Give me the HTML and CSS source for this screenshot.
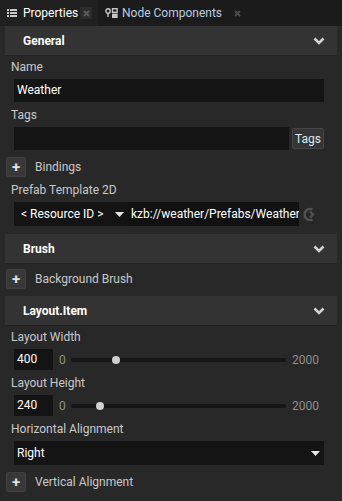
FILE: index.html
```html
<!DOCTYPE html>
<html>
<head>
  <title>Properties</title>
  <link rel="stylesheet" href="styles.css">
</head>
<body>
  <div class="tabs">
    <div class="tab active">
      <svg class="tab-icon" width="10" height="8" viewBox="0 0 10 8">
        <rect x="0" y="0" width="2" height="2" fill="#c8c8c8"/>
        <rect x="3" y="0" width="7" height="2" fill="#c8c8c8"/>
        <rect x="0" y="3" width="2" height="2" fill="#c8c8c8"/>
        <rect x="3" y="3" width="7" height="2" fill="#c8c8c8"/>
        <rect x="0" y="6" width="2" height="2" fill="#c8c8c8"/>
        <rect x="3" y="6" width="7" height="2" fill="#c8c8c8"/>
      </svg>
      <span>Properties</span>
      <span class="close boxed">
        <svg width="7" height="7" viewBox="0 0 7 7"><path d="M1 1L6 6M6 1L1 6" stroke="#5a5a5a" stroke-width="2"/></svg>
      </span>
    </div>
    <div class="tab">
      <svg class="tab-icon tight" width="14" height="10" viewBox="0 0 14 10">
        <circle cx="3" cy="3" r="2.2" fill="none" stroke="#c8c8c8" stroke-width="1.4"/>
        <rect x="2.3" y="5" width="1.4" height="4" fill="#c8c8c8"/>
        <rect x="7.5" y="0.7" width="4.6" height="3.6" fill="none" stroke="#c8c8c8" stroke-width="1.4"/>
        <rect x="7" y="5.6" width="5.6" height="4.4" fill="#c8c8c8"/>
      </svg>
      <span>Node Components</span>
      <span class="close">
        <svg width="7" height="7" viewBox="0 0 7 7"><path d="M1 1L6 6M6 1L1 6" stroke="#4a4a4a" stroke-width="2"/></svg>
      </span>
    </div>
  </div>

  <div class="panel">
    <div class="section-head">
      <span>General</span>
      <svg class="chevron" width="12" height="8" viewBox="0 0 12 8"><path d="M1.5 1.5L6 6L10.5 1.5" fill="none" stroke="#d2d2d2" stroke-width="2.6"/></svg>
    </div>

    <div class="field">
      <div class="label">Name</div>
      <div class="input">Weather</div>
    </div>

    <div class="field">
      <div class="label">Tags</div>
      <div class="row">
        <div class="input grow"></div>
        <button class="btn">Tags</button>
      </div>
    </div>

    <div class="add-row">
      <span class="plus">+</span>
      <span>Bindings</span>
    </div>

    <div class="field">
      <div class="label">Prefab Template 2D</div>
      <div class="row resource">
        <div class="combo small">
          <span>&lt; Resource ID &gt;</span>
          <svg width="9" height="5" viewBox="0 0 9 5"><path d="M0 0H9L4.5 5Z" fill="#e6e6e6"/></svg>
        </div>
        <div class="input path">kzb://weather/Prefabs/Weather</div>
        <svg class="goto" width="15" height="15" viewBox="0 0 15 15">
          <path d="M9.5 2.4A5.6 5.6 0 1 0 9.5 12.6" fill="none" stroke="#505050" stroke-width="2.4"/>
          <path d="M7 4.5L10 7.5L7 10.5" fill="none" stroke="#505050" stroke-width="2.4"/>
        </svg>
      </div>
    </div>

    <div class="section-head">
      <span>Brush</span>
      <svg class="chevron" width="12" height="8" viewBox="0 0 12 8"><path d="M1.5 1.5L6 6L10.5 1.5" fill="none" stroke="#d2d2d2" stroke-width="2.6"/></svg>
    </div>

    <div class="add-row">
      <span class="plus">+</span>
      <span>Background Brush</span>
    </div>

    <div class="section-head">
      <span>Layout.Item</span>
      <svg class="chevron" width="12" height="8" viewBox="0 0 12 8"><path d="M1.5 1.5L6 6L10.5 1.5" fill="none" stroke="#d2d2d2" stroke-width="2.6"/></svg>
    </div>

    <div class="field">
      <div class="label">Layout Width</div>
      <div class="row slider-row">
        <div class="input num">400</div>
        <span class="range">0</span>
        <div class="track"><div class="travel"><span class="thumb" style="left: 20%"></span></div></div>
        <span class="range">2000</span>
      </div>
    </div>

    <div class="field">
      <div class="label">Layout Height</div>
      <div class="row slider-row">
        <div class="input num">240</div>
        <span class="range">0</span>
        <div class="track"><div class="travel"><span class="thumb" style="left: 12%"></span></div></div>
        <span class="range">2000</span>
      </div>
    </div>

    <div class="field">
      <div class="label">Horizontal Alignment</div>
      <div class="combo wide">
        <span>Right</span>
        <svg width="9" height="5" viewBox="0 0 9 5"><path d="M0 0H9L4.5 5Z" fill="#e6e6e6"/></svg>
      </div>
    </div>

    <div class="add-row">
      <span class="plus">+</span>
      <span>Vertical Alignment</span>
    </div>
  </div>
</body>
</html>
```

FILE: styles.css
```css
body {
  margin: 0;
  background: #282828;
  font-family: Roboto, "Open Sans", sans-serif;
  font-size: 12px;
  color: #c8c8c8;
  width: 342px;
  height: 501px;
  overflow: hidden;
}

/* tab strip */
.tabs {
  display: flex;
  height: 26px;
  background: #1b1b1b;
}
.tab {
  display: flex;
  align-items: center;
  padding: 0 6px 0 7px;
  font-size: 12px;
  color: #b9cde0;
}
.tab.active {
  width: 85px;
  background: #202020;
  color: #ffffff;
}
.tab-icon {
  margin-right: 6px;
  flex: none;
}
.tab-icon.tight {
  margin-right: 3px;
}
.close {
  display: flex;
  align-items: center;
  justify-content: center;
  width: 12px;
  height: 12px;
  margin-left: 9px;
}
.close.boxed {
  background: #2c2c2c;
  margin-left: auto;
}

.panel {
  padding: 0 5px;
}

/* collapsible section headers */
.section-head {
  display: flex;
  align-items: center;
  justify-content: space-between;
  height: 30px;
  padding: 0 12px 0 18px;
  background: #333333;
  border-bottom: 1px solid #222;
  box-sizing: border-box;
  color: #ffffff;
  font-weight: bold;
  margin-top: 8px;
}
.panel > .section-head:first-child {
  margin-top: 0;
}
.add-row + .section-head {
  margin-top: 7px;
}

.field {
  padding: 5px 13px 0 9px;
}
.section-head + .field {
  padding-top: 3px;
}
.label {
  line-height: 16px;
  margin: 0 0 4px -3px;
}
.row {
  display: flex;
  align-items: center;
}
.input {
  height: 23px;
  line-height: 23px;
  padding: 0 3px;
  background: #141414;
  color: #ffffff;
  box-sizing: border-box;
  white-space: nowrap;
  overflow: hidden;
}
.grow {
  flex: 1;
}
.btn {
  height: 21px;
  margin-left: 3px;
  padding: 0 2px;
  background: #353535;
  border: 1px solid #454545;
  border-radius: 2px;
  color: #dde8f2;
  font: inherit;
}

/* add property rows */
.add-row {
  display: flex;
  align-items: center;
  height: 20px;
  margin-top: 7px;
  padding-left: 1px;
}
.section-head + .add-row {
  margin-top: 5px;
}
.plus {
  display: flex;
  align-items: center;
  justify-content: center;
  width: 20px;
  height: 20px;
  margin-right: 9px;
  background: #383838;
  border: 1px solid #404040;
  border-radius: 2px;
  box-sizing: border-box;
  color: #e0e0e0;
  font-weight: bold;
  font-size: 15px;
}

/* combos */
.combo {
  display: flex;
  align-items: center;
  justify-content: space-between;
  height: 24px;
  background: #141414;
  color: #ffffff;
  box-sizing: border-box;
  padding: 0 4px 0 3px;
}
.combo.small {
  width: 114px;
  padding-left: 7px;
}
.resource .path {
  height: 24px;
  line-height: 24px;
  width: 171px;
  flex: none;
  background: #111;
}
.goto {
  margin-left: 4px;
}

/* sliders */
.slider-row .num {
  width: 39px;
  height: 21px;
  line-height: 21px;
}
.range {
  color: #8f8f8f;
  margin: 0 5px 0 6px;
}
.track {
  flex: 1;
  height: 4px;
  border-radius: 2px;
  background: #151515;
}
.travel {
  position: relative;
  margin: 0 4px;
  height: 4px;
}
.thumb {
  position: absolute;
  top: -2px;
  width: 8px;
  height: 8px;
  margin-left: -4px;
  border-radius: 50%;
  background: #d0d0d0;
}
```
